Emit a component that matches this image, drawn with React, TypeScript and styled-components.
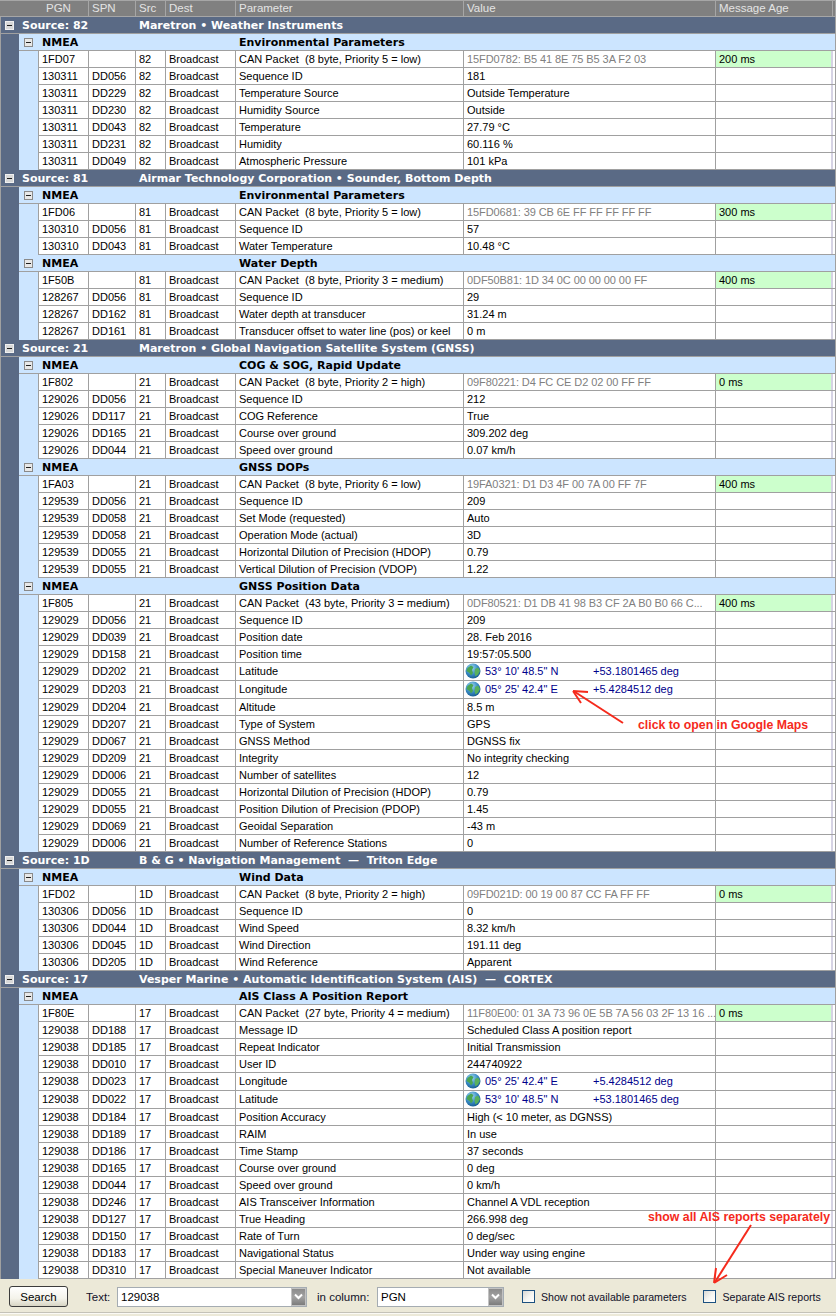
import React from 'react';
import styled, { createGlobalStyle } from 'styled-components';

const COLS = '50px 47px 30px 70px 228px 252px 117px';

const GlobalStyle = createGlobalStyle`
  html, body {
    margin: 0;
    padding: 0;
    background: #ece9d8;
    overflow: hidden;
  }
  body {
    font-family: "Liberation Sans", Arial, sans-serif;
    font-size: 11px;
    color: #000;
  }
`;

const Page = styled.div`
  position: relative;
  width: 836px;
  height: 1316px;
  overflow: hidden;
`;

const HeaderRow = styled.div`
  display: grid;
  grid-template-columns: 39px ${COLS} 1fr;
  height: 15px;
  width: 835px;
  background: #808080;
  border-top: 1px solid #a6a6a6;
  border-bottom: 1px solid #a6a6a6;
  border-right: 1px solid #a6a6a6;
`;

const HeaderCell = styled.div<{ $indent?: number; $blank?: boolean }>`
  padding-left: ${(p) => p.$indent ?? 3}px;
  line-height: 15px;
  font-size: 11.5px;
  color: #e4e4e4;
  border-right: ${(p) => (p.$blank ? 'none' : '1px solid #a6a6a6')};
  box-sizing: border-box;
  white-space: nowrap;
  overflow: hidden;
`;

const SourceBlock = styled.section`
  background: #5a6a85;
  padding-left: 18px;
  width: 836px;
  border-left: 1px solid #a0a0a0;
  border-right: 1px solid #a0a0a0;
  box-sizing: border-box;
`;

const SourceRow = styled.div`
  display: flex;
  align-items: center;
  height: 16px;
  margin-left: -18px;
  background: #5a6a85;
  border-bottom: 1px solid #a0a0a0;
  color: #fff;
  font-family: "DejaVu Sans", Verdana, sans-serif;
  font-weight: bold;
  font-size: 11px;
  white-space: pre;
`;

const SourceLabel = styled.div`
  width: 117px;
  margin-left: 8px;
`;

const ExpandBox = styled.span<{ $light?: boolean }>`
  display: flex;
  align-items: center;
  justify-content: center;
  flex: none;
  width: 9px;
  height: 9px;
  box-sizing: border-box;
  background: ${(p) => (p.$light ? '#e8e8e8' : '#d8d8d8')};
  border: 1px solid ${(p) => (p.$light ? '#8a8a8a' : '#f0f0f0')};

  &::before {
    content: '';
    width: 5px;
    height: 1px;
    background: #202020;
  }
`;

const SourceBox = styled(ExpandBox)`
  margin-left: 4px;
`;

const Group = styled.div`
  background: #cce5ff;
  padding-left: 19px;
`;

const GroupRow = styled.div`
  display: flex;
  align-items: center;
  height: 16px;
  margin-left: -19px;
  border-bottom: 1px solid #a0a0a0;
  font-family: "DejaVu Sans", Verdana, sans-serif;
  font-weight: bold;
  font-size: 11px;
  white-space: nowrap;
  color: #000;
`;

const GroupBox = styled(ExpandBox)`
  margin-left: 5px;
`;

const GroupLabel = styled.div`
  width: 197px;
  margin-left: 9px;
`;

const Row = styled.div<{ $tall?: boolean }>`
  display: grid;
  grid-template-columns: ${COLS};
  height: ${(p) => (p.$tall ? 17 : 16)}px;
  background: #fff;
  border-bottom: 1px solid #a0a0a0;
  border-left: 1px solid #a0a0a0;
`;

const Cell = styled.div<{ $grey?: boolean; $fresh?: boolean }>`
  padding-left: 3px;
  line-height: 16px;
  border-right: 1px solid #a0a0a0;
  box-sizing: border-box;
  white-space: pre;
  overflow: hidden;
  letter-spacing: ${(p) => (p.$grey ? '-0.08px' : 'normal')};
  color: ${(p) => (p.$grey ? '#808080' : '#000')};
  background: ${(p) => (p.$fresh ? '#ccffcc' : 'transparent')};
`;

const AgeCell = styled(Cell)`
  border-right: 2px solid #d6d3e4;
`;

const CoordCell = styled.div`
  display: flex;
  align-items: flex-start;
  padding-left: 1px;
  line-height: 16px;
  border-right: 1px solid #a0a0a0;
  color: #00008b;
  white-space: nowrap;
`;

const CoordDms = styled.span`
  width: 108px;
  margin-left: 4px;
`;

const Footer = styled.div`
  display: flex;
  align-items: center;
  height: 31px;
  padding-top: 2px;
  border-bottom: 1px solid #c4c2b8;
  box-shadow: 0 1px 0 #fbfaf5;
  white-space: nowrap;
`;

const SearchButton = styled.button`
  flex: none;
  width: 59px;
  height: 21px;
  margin: 0 0 0 9px;
  padding: 0;
  font: inherit;
  font-size: 11.5px;
  color: #000;
  border: 1px solid #3c3c3c;
  border-radius: 3px;
  background: linear-gradient(#ffffff, #f4f3ea 60%, #d8d5c4);
`;

const FieldLabel = styled.label<{ $left: number; $width: number }>`
  flex: none;
  margin-left: ${(p) => p.$left}px;
  width: ${(p) => p.$width}px;
  font-size: 11.5px;
  color: #101028;
`;

const Combo = styled.div<{ $width: number }>`
  flex: none;
  display: flex;
  align-items: stretch;
  width: ${(p) => p.$width}px;
  height: 20px;
  box-sizing: border-box;
  background: #fff;
  border: 1px solid #a5acb2;
  font-size: 11.5px;
`;

const ComboText = styled.div`
  flex: 1;
  line-height: 18px;
  padding-left: 3px;
`;

const ComboArrow = styled.div`
  display: flex;
  align-items: center;
  justify-content: center;
  width: 15px;
  background: linear-gradient(#8c8c8c, #a2a2a2 50%, #7c7c7c);
  border: 1px solid #c2c2c2;
  box-sizing: border-box;
`;

const CheckField = styled.div<{ $left: number }>`
  flex: none;
  display: flex;
  align-items: center;
  gap: 6px;
  margin-left: ${(p) => p.$left}px;
  font-size: 10.6px;
  color: #101028;
`;

const CheckMark = styled.span`
  width: 13px;
  height: 13px;
  box-sizing: border-box;
  border: 1px solid #1c5180;
  background: linear-gradient(135deg, #d8d8d4, #f6f6f2 55%, #ffffff);
`;

const Note = styled.div<{ $x: number; $y: number }>`
  position: absolute;
  left: ${(p) => p.$x}px;
  top: ${(p) => p.$y}px;
  color: #f52a1c;
  font-weight: bold;
  font-size: 12.3px;
  line-height: 14px;
  white-space: nowrap;
`;

const ArrowLayer = styled.svg`
  position: absolute;
  left: 0;
  top: 0;
  pointer-events: none;
`;

type Coord = { dms: string; deg: string };
type RowData = [string, string, string, string, string | Coord];
type GroupData = { title: string; id: string; data: string; age: string; param: string; src: string; rows: RowData[] };
type SourceData = { src: string; name: string; groups: GroupData[] };

const LAT: Coord = { dms: `53° 10' 48.5" N`, deg: '+53.1801465 deg' };
const LON: Coord = { dms: `05° 25' 42.4" E`, deg: '+5.4284512 deg' };

const SOURCES: SourceData[] = [
  {
    src: '82',
    name: 'Maretron • Weather Instruments',
    groups: [
      {
        title: 'Environmental Parameters', id: '1FD07', src: '82',
        param: 'CAN Packet  (8 byte, Priority 5 = low)', data: '15FD0782: B5 41 8E 75 B5 3A F2 03', age: '200 ms',
        rows: [
          ['130311', 'DD056', '82', 'Sequence ID', '181'],
          ['130311', 'DD229', '82', 'Temperature Source', 'Outside Temperature'],
          ['130311', 'DD230', '82', 'Humidity Source', 'Outside'],
          ['130311', 'DD043', '82', 'Temperature', '27.79 °C'],
          ['130311', 'DD231', '82', 'Humidity', '60.116 %'],
          ['130311', 'DD049', '82', 'Atmospheric Pressure', '101 kPa'],
        ],
      },
    ],
  },
  {
    src: '81',
    name: 'Airmar Technology Corporation • Sounder, Bottom Depth',
    groups: [
      {
        title: 'Environmental Parameters', id: '1FD06', src: '81',
        param: 'CAN Packet  (8 byte, Priority 5 = low)', data: '15FD0681: 39 CB 6E FF FF FF FF FF', age: '300 ms',
        rows: [
          ['130310', 'DD056', '81', 'Sequence ID', '57'],
          ['130310', 'DD043', '81', 'Water Temperature', '10.48 °C'],
        ],
      },
      {
        title: 'Water Depth', id: '1F50B', src: '81',
        param: 'CAN Packet  (8 byte, Priority 3 = medium)', data: '0DF50B81: 1D 34 0C 00 00 00 00 FF', age: '400 ms',
        rows: [
          ['128267', 'DD056', '81', 'Sequence ID', '29'],
          ['128267', 'DD162', '81', 'Water depth at transducer', '31.24 m'],
          ['128267', 'DD161', '81', 'Transducer offset to water line (pos) or keel', '0 m'],
        ],
      },
    ],
  },
  {
    src: '21',
    name: 'Maretron • Global Navigation Satellite System (GNSS)',
    groups: [
      {
        title: 'COG & SOG, Rapid Update', id: '1F802', src: '21',
        param: 'CAN Packet  (8 byte, Priority 2 = high)', data: '09F80221: D4 FC CE D2 02 00 FF FF', age: '0 ms',
        rows: [
          ['129026', 'DD056', '21', 'Sequence ID', '212'],
          ['129026', 'DD117', '21', 'COG Reference', 'True'],
          ['129026', 'DD165', '21', 'Course over ground', '309.202 deg'],
          ['129026', 'DD044', '21', 'Speed over ground', '0.07 km/h'],
        ],
      },
      {
        title: 'GNSS DOPs', id: '1FA03', src: '21',
        param: 'CAN Packet  (8 byte, Priority 6 = low)', data: '19FA0321: D1 D3 4F 00 7A 00 FF 7F', age: '400 ms',
        rows: [
          ['129539', 'DD056', '21', 'Sequence ID', '209'],
          ['129539', 'DD058', '21', 'Set Mode (requested)', 'Auto'],
          ['129539', 'DD058', '21', 'Operation Mode (actual)', '3D'],
          ['129539', 'DD055', '21', 'Horizontal Dilution of Precision (HDOP)', '0.79'],
          ['129539', 'DD055', '21', 'Vertical Dilution of Precision (VDOP)', '1.22'],
        ],
      },
      {
        title: 'GNSS Position Data', id: '1F805', src: '21',
        param: 'CAN Packet  (43 byte, Priority 3 = medium)', data: '0DF80521: D1 DB 41 98 B3 CF 2A B0 B0 66 C...', age: '400 ms',
        rows: [
          ['129029', 'DD056', '21', 'Sequence ID', '209'],
          ['129029', 'DD039', '21', 'Position date', '28. Feb 2016'],
          ['129029', 'DD158', '21', 'Position time', '19:57:05.500'],
          ['129029', 'DD202', '21', 'Latitude', LAT],
          ['129029', 'DD203', '21', 'Longitude', LON],
          ['129029', 'DD204', '21', 'Altitude', '8.5 m'],
          ['129029', 'DD207', '21', 'Type of System', 'GPS'],
          ['129029', 'DD067', '21', 'GNSS Method', 'DGNSS fix'],
          ['129029', 'DD209', '21', 'Integrity', 'No integrity checking'],
          ['129029', 'DD006', '21', 'Number of satellites', '12'],
          ['129029', 'DD055', '21', 'Horizontal Dilution of Precision (HDOP)', '0.79'],
          ['129029', 'DD055', '21', 'Position Dilution of Precision (PDOP)', '1.45'],
          ['129029', 'DD069', '21', 'Geoidal Separation', '-43 m'],
          ['129029', 'DD006', '21', 'Number of Reference Stations', '0'],
        ],
      },
    ],
  },
  {
    src: '1D',
    name: 'B & G • Navigation Management  —  Triton Edge',
    groups: [
      {
        title: 'Wind Data', id: '1FD02', src: '1D',
        param: 'CAN Packet  (8 byte, Priority 2 = high)', data: '09FD021D: 00 19 00 87 CC FA FF FF', age: '0 ms',
        rows: [
          ['130306', 'DD056', '1D', 'Sequence ID', '0'],
          ['130306', 'DD044', '1D', 'Wind Speed', '8.32 km/h'],
          ['130306', 'DD045', '1D', 'Wind Direction', '191.11 deg'],
          ['130306', 'DD205', '1D', 'Wind Reference', 'Apparent'],
        ],
      },
    ],
  },
  {
    src: '17',
    name: 'Vesper Marine • Automatic Identification System (AIS)  —  CORTEX',
    groups: [
      {
        title: 'AIS Class A Position Report', id: '1F80E', src: '17',
        param: 'CAN Packet  (27 byte, Priority 4 = medium)', data: '11F80E00: 01 3A 73 96 0E 5B 7A 56 03 2F 13 16 ...', age: '0 ms',
        rows: [
          ['129038', 'DD188', '17', 'Message ID', 'Scheduled Class A position report'],
          ['129038', 'DD185', '17', 'Repeat Indicator', 'Initial Transmission'],
          ['129038', 'DD010', '17', 'User ID', '244740922'],
          ['129038', 'DD023', '17', 'Longitude', LON],
          ['129038', 'DD022', '17', 'Latitude', LAT],
          ['129038', 'DD184', '17', 'Position Accuracy', 'High (< 10 meter, as DGNSS)'],
          ['129038', 'DD189', '17', 'RAIM', 'In use'],
          ['129038', 'DD186', '17', 'Time Stamp', '37 seconds'],
          ['129038', 'DD165', '17', 'Course over ground', '0 deg'],
          ['129038', 'DD044', '17', 'Speed over ground', '0 km/h'],
          ['129038', 'DD246', '17', 'AIS Transceiver Information', 'Channel A VDL reception'],
          ['129038', 'DD127', '17', 'True Heading', '266.998 deg'],
          ['129038', 'DD150', '17', 'Rate of Turn', '0 deg/sec'],
          ['129038', 'DD183', '17', 'Navigational Status', 'Under way using engine'],
          ['129038', 'DD310', '17', 'Special Maneuver Indicator', 'Not available'],
        ],
      },
    ],
  },
];

function Globe() {
  return (
    <svg width="16" height="16" viewBox="0 0 16 16">
      <defs>
        <radialGradient id="sea" cx="40%" cy="30%" r="75%">
          <stop offset="0%" stopColor="#a4dcf4" />
          <stop offset="55%" stopColor="#3a8cc4" />
          <stop offset="100%" stopColor="#14588c" />
        </radialGradient>
      </defs>
      <circle cx="8" cy="8" r="7.5" fill="url(#sea)" />
      <path d="M2.5 5 6 2.5 8.5 4 7 7 8 10 6 12.5 4.5 10 1.5 8Z" fill="#4aa552" />
      <path d="M10 6 13 4.5 15 8 13 11.5 10.5 13.5 9.5 10Z" fill="#58b05c" />
    </svg>
  );
}

function Chevron() {
  return (
    <svg width="9" height="7" viewBox="0 0 9 7">
      <path d="M1 1.5 4.5 5 8 1.5" fill="none" stroke="#fff" strokeWidth="2" />
    </svg>
  );
}

function DataRow({ row }: { row: RowData }) {
  const [pgn, spn, src, param, value] = row;
  const isCoord = typeof value !== 'string';
  return (
    <Row $tall={isCoord}>
      <Cell>{pgn}</Cell>
      <Cell>{spn}</Cell>
      <Cell>{src}</Cell>
      <Cell>Broadcast</Cell>
      <Cell>{param}</Cell>
      {typeof value === 'string' ? (
        <Cell>{value}</Cell>
      ) : (
        <CoordCell>
          <Globe />
          <CoordDms>{value.dms}</CoordDms>
          <span>{value.deg}</span>
        </CoordCell>
      )}
      <AgeCell />
    </Row>
  );
}

function PgnGroup({ group }: { group: GroupData }) {
  return (
    <Group>
      <GroupRow>
        <GroupBox $light />
        <GroupLabel>NMEA</GroupLabel>
        {group.title}
      </GroupRow>
      <Row>
        <Cell>{group.id}</Cell>
        <Cell />
        <Cell>{group.src}</Cell>
        <Cell>Broadcast</Cell>
        <Cell>{group.param}</Cell>
        <Cell $grey>{group.data}</Cell>
        <AgeCell $fresh>{group.age}</AgeCell>
      </Row>
      {group.rows.map((r, i) => (
        <DataRow key={i} row={r} />
      ))}
    </Group>
  );
}

export default function App() {
  return (
    <Page>
      <GlobalStyle />
      <HeaderRow>
        <HeaderCell $blank />
        <HeaderCell $indent={7}>PGN</HeaderCell>
        <HeaderCell>SPN</HeaderCell>
        <HeaderCell>Src</HeaderCell>
        <HeaderCell>Dest</HeaderCell>
        <HeaderCell>Parameter</HeaderCell>
        <HeaderCell>Value</HeaderCell>
        <HeaderCell>Message Age</HeaderCell>
      </HeaderRow>

      {SOURCES.map((s) => (
        <SourceBlock key={s.src}>
          <SourceRow>
            <SourceBox />
            <SourceLabel>Source: {s.src}</SourceLabel>
            {s.name}
          </SourceRow>
          {s.groups.map((g) => (
            <PgnGroup key={g.id} group={g} />
          ))}
        </SourceBlock>
      ))}

      <Footer>
        <SearchButton>Search</SearchButton>
        <FieldLabel $left={18} $width={31}>Text:</FieldLabel>
        <Combo $width={190}>
          <ComboText>129038</ComboText>
          <ComboArrow><Chevron /></ComboArrow>
        </Combo>
        <FieldLabel $left={10} $width={60}>in column:</FieldLabel>
        <Combo $width={127}>
          <ComboText>PGN</ComboText>
          <ComboArrow><Chevron /></ComboArrow>
        </Combo>
        <CheckField $left={18}>
          <CheckMark />
          Show not available parameters
        </CheckField>
        <CheckField $left={17}>
          <CheckMark />
          Separate AIS reports
        </CheckField>
      </Footer>

      <Note $x={638} $y={718}>click to open in Google Maps</Note>
      <Note $x={648} $y={1210}>show all AIS reports separately</Note>
      <ArrowLayer width="836" height="1316" viewBox="0 0 836 1316">
        <path d="M623 723 575 692" stroke="#f52a1c" strokeWidth="2" fill="none" />
        <path d="M573 691 588 692 M573 691 581 703" stroke="#f52a1c" strokeWidth="2" fill="none" />
        <path d="M751 1225 715 1282" stroke="#f52a1c" strokeWidth="2" fill="none" />
        <path d="M714 1283 716 1268 M714 1283 727 1275" stroke="#f52a1c" strokeWidth="2" fill="none" />
      </ArrowLayer>
    </Page>
  );
}
